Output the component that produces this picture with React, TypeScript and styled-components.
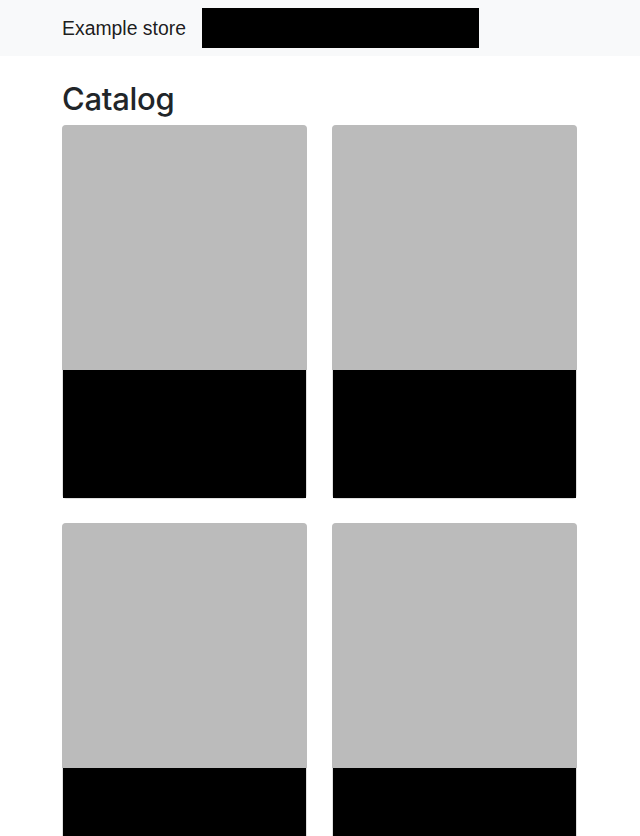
import React from "react";
import styled, { createGlobalStyle } from "styled-components";

const Global = createGlobalStyle`
  * { box-sizing: border-box; }
  html, body { margin: 0; padding: 0; }
  body {
    font-family: "Liberation Sans", Arial, sans-serif;
    color: #212529;
    background: #fff;
    line-height: 1.5;
  }
`;

const Navbar = styled.nav`
  background: #f8f9fa;
  height: 56px;
  display: flex;
  align-items: center;
`;

const Container = styled.div`
  width: 540px;
  margin: 0 auto;
  padding: 0 12px;
`;

const NavInner = styled(Container)`
  display: flex;
  align-items: center;
`;

const Brand = styled.a`
  font-size: 19.4px;
  color: rgba(0, 0, 0, 0.9);
  text-decoration: none;
  margin-right: 16px;
  line-height: 30px;
`;

const Redacted = styled.div<{ $w: number; $h: number }>`
  width: ${(p) => p.$w}px;
  height: ${(p) => p.$h}px;
  background: #000;
`;

const Title = styled.h2`
  font-family: Inter, "Liberation Sans", sans-serif;
  font-size: 31px;
  font-weight: 500;
  letter-spacing: -0.3px;
  line-height: 1.2;
  margin: 24px 0 8px;
`;

const Grid = styled.div`
  display: grid;
  grid-template-columns: 245px 245px;
  gap: 24px 25px;
`;

const Card = styled.div`
  border: 1px solid rgba(0, 0, 0, 0.125);
  border-radius: 4px;
  display: flex;
  flex-direction: column;
`;

const CardImage = styled.div`
  aspect-ratio: 1 / 1;
  background: #bbbbbb;
  margin: -1px -1px 0;
  border-radius: 4px 4px 0 0;
`;

const CardBody = styled.div`
  height: 128px;
  background: #000;
`;

const items = [1, 2, 3, 4];

export default function App() {
  return (
    <>
      <Global />
      <Navbar>
        <NavInner>
          <Brand href="#">Example store</Brand>
          <Redacted $w={277} $h={40} />
        </NavInner>
      </Navbar>
      <Container>
        <Title>Catalog</Title>
        <Grid>
          {items.map((i) => (
            <Card key={i}>
              <CardImage />
              <CardBody />
            </Card>
          ))}
        </Grid>
      </Container>
    </>
  );
}
